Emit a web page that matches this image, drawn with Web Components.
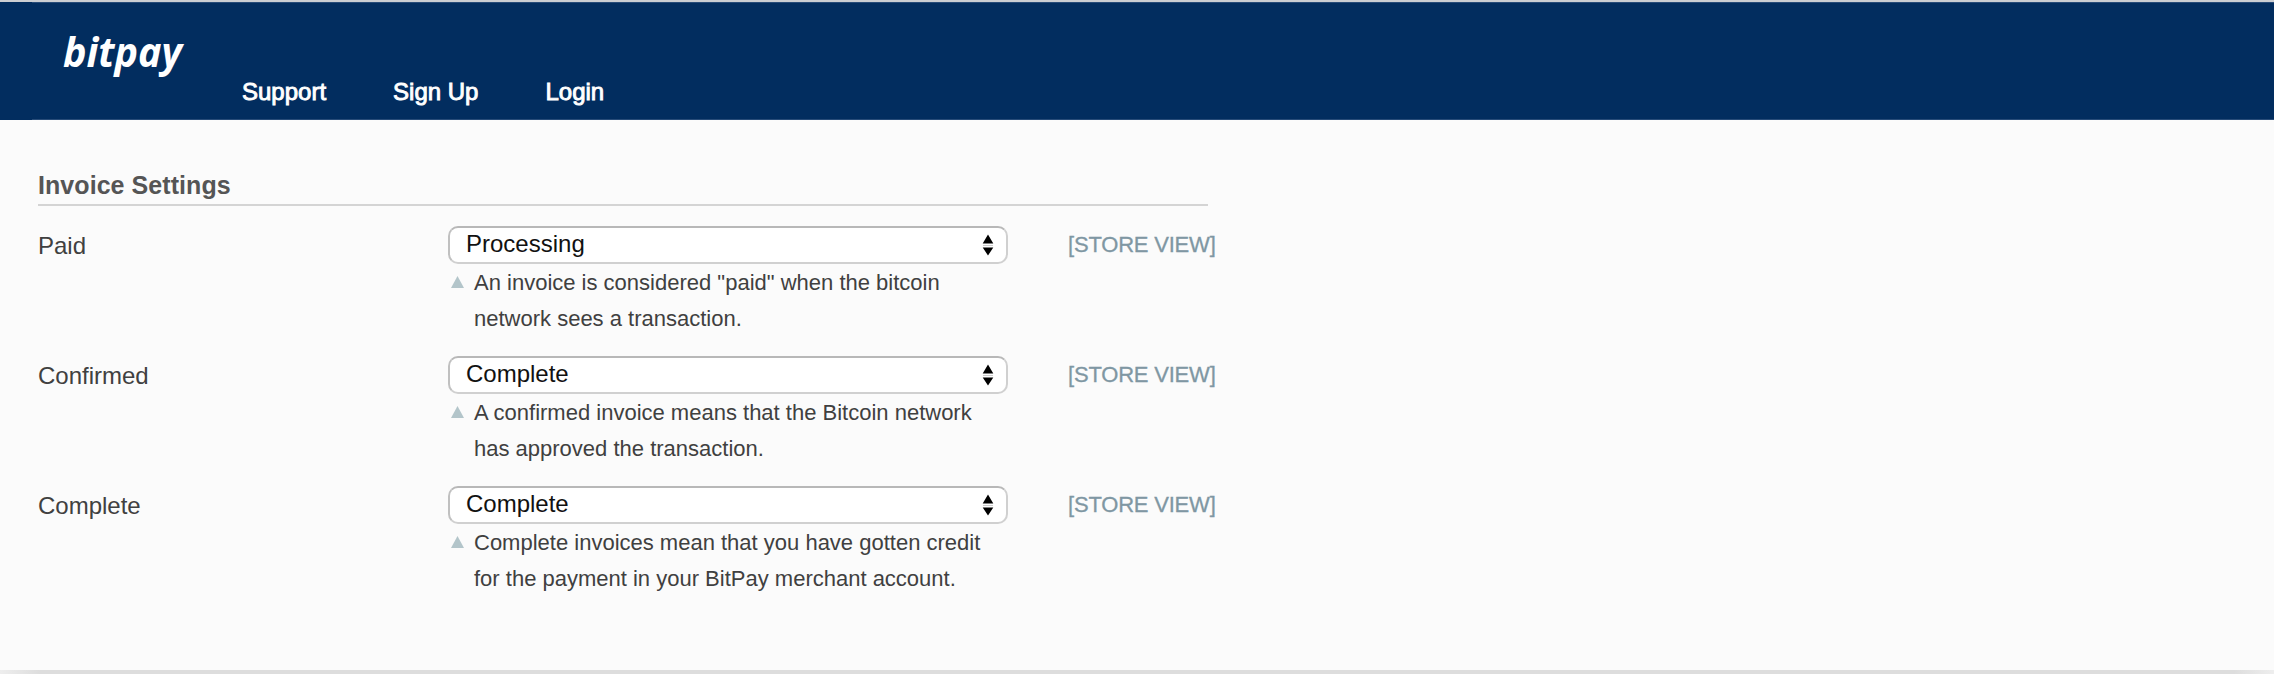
<!DOCTYPE html>
<html lang="en"><head><meta charset="utf-8"><title>BitPay Invoice Settings</title>
<style>
html,body{margin:0;height:100%;background:#fbfbfb;overflow:hidden}
body{font-family:"Liberation Sans",Arial,sans-serif;font-size:24px;color:#404040}
</style></head><body>
<bp-page>
<bp-header slot="header"><bp-link>Support</bp-link><bp-link>Sign Up</bp-link><bp-link>Login</bp-link></bp-header>
<bp-section heading="Invoice Settings">
<bp-setting label="Paid" value="Processing">An invoice is considered "paid" when the bitcoin<br>network sees a transaction.</bp-setting>
<bp-setting label="Confirmed" value="Complete">A confirmed invoice means that the Bitcoin network<br>has approved the transaction.</bp-setting>
<bp-setting label="Complete" value="Complete">Complete invoices mean that you have gotten credit<br>for the payment in your BitPay merchant account.</bp-setting>
</bp-section>
</bp-page>
<script>
class Base extends HTMLElement{
  connectedCallback(){ if(!this.shadowRoot) this.attachShadow({mode:'open'}).innerHTML=this.view(); }
}
customElements.define('bp-page',class extends Base{view(){return `<style>
:host{display:flex;flex-direction:column;height:100vh}
main{flex:1;min-height:0}
footer{height:4px;background:linear-gradient(90deg,#eee,#ddd 40px,#ddd calc(100% - 40px),#eee)}
</style><slot name="header"></slot><main><slot></slot></main><footer></footer>`}});
customElements.define('bp-header',class extends Base{view(){return `<style>
:host{display:flex;box-sizing:border-box;height:120px;border-top:2px solid #ccced2;background:linear-gradient(#274b78,#274b78) 32px 0/100% 1px no-repeat,linear-gradient(#274b78,#274b78) 32px 100%/100% 1px no-repeat,#022d5f}
svg{display:block;width:130px;height:90px;margin:10px 0 0 62px;overflow:visible}
text{font:italic 700 42px "Noto Sans","Open Sans",sans-serif;fill:#fff}
nav{display:flex;gap:67px;margin:76px 0 0 50px}
</style><svg viewBox="0 0 130 90"><text x="1" y="55" textLength="119" lengthAdjust="spacingAndGlyphs">bitpay</text></svg><nav><slot></slot></nav>`}});
customElements.define('bp-link',class extends Base{view(){return `<style>
:host{display:block;color:#fff;line-height:28px;white-space:nowrap;-webkit-text-stroke:.9px #fff}
</style><slot></slot>`}});
customElements.define('bp-section',class extends Base{view(){return `<style>
:host{display:block;padding:51px 0 0 38px}
h2{box-sizing:border-box;width:1170px;height:35px;margin:0 0 20px;border-bottom:2px solid #d4d4d4;font-size:25px;line-height:29px;letter-spacing:.06px;color:#555}
</style><h2>${this.getAttribute('heading')}</h2><slot></slot>`}});
customElements.define('bp-select',class extends Base{view(){return `<style>
:host{display:flex;box-sizing:border-box;height:38px;border:2px solid #d0d0d0;border-top-color:#b8b8b8;border-left-color:#c0c0c0;border-radius:10px;background:#fff;color:#111;padding:0 12px 0 16px;justify-content:space-between;line-height:32px}
svg{width:12px;height:22px;margin-top:6px}
</style><slot></slot><svg viewBox="0 0 12 22"><path d="M6 0.5L11.3 9.5H.7zM6 21.5L.7 13.5h10.6z" fill="#000"/><path d="M1 11.5h10" stroke="#ccc"/></svg>`}});
customElements.define('bp-setting',class extends Base{view(){return `<style>
:host{display:grid;grid-template-columns:410px 560px 160px;height:130px}
.label{line-height:39px}
.hint{display:grid;grid-template-columns:26px 1fr;font-size:22px;line-height:36px;white-space:nowrap;padding-top:1px}
.hint svg{width:13px;height:12px;margin:11px 0 0 3px}
.scope{padding-left:60px;font-size:22px;line-height:37px;letter-spacing:-.2px;color:#7f97a3;-webkit-text-stroke:.3px #7f97a3;white-space:nowrap}
</style><div class="label">${this.getAttribute('label')}</div><div><bp-select>${this.getAttribute('value')}</bp-select><div class="hint"><svg viewBox="0 0 14 12" preserveAspectRatio="none"><path d="M7 0l7 12H0z" fill="#b3c5ca"/></svg><div><slot></slot></div></div></div><div class="scope">[STORE VIEW]</div>`}});
</script></body></html>
